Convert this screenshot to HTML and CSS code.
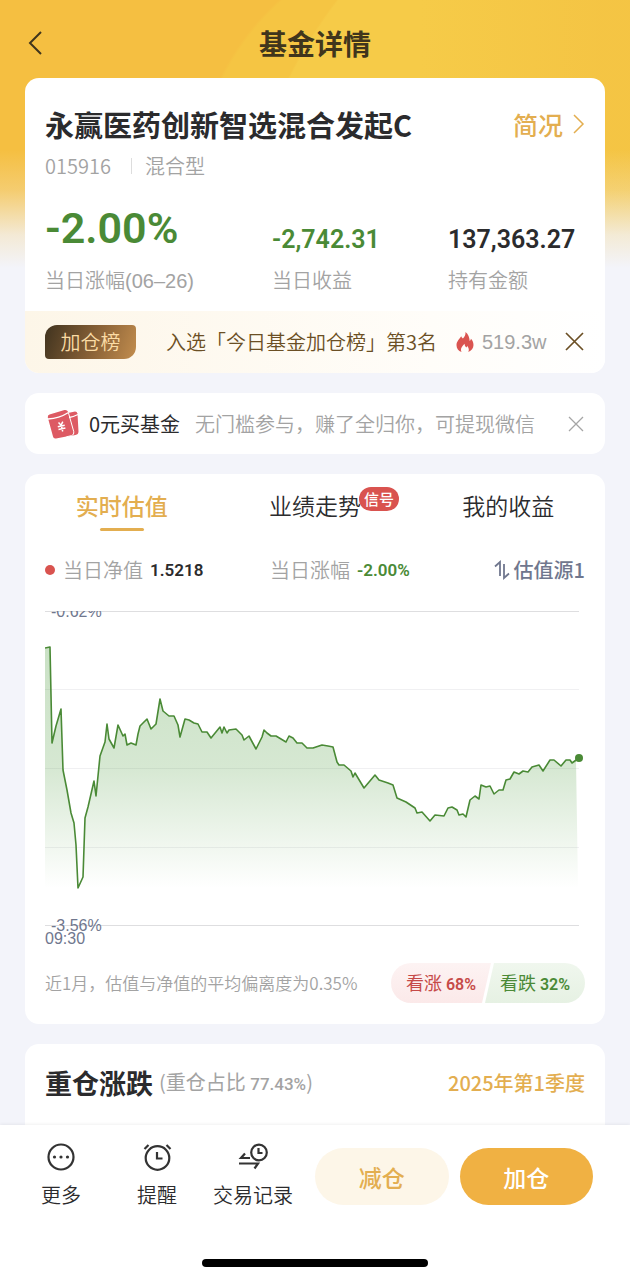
FILE: index.html
```html
<!DOCTYPE html>
<html lang="zh-CN">
<head>
    <meta charset="UTF-8">
    <meta name="viewport" content="width=device-width, initial-scale=1.0">
    <title>基金详情</title>
    <link rel="stylesheet" href="styles.css">
</head>
<body>
    <div class="screen">
        <!-- 顶部导航 -->
        <header class="header">
            <button class="icon-btn back-btn" aria-label="返回">
                <svg width="16" height="26" viewBox="0 0 16 26"><path d="M14 2 3 13l11 11" fill="none" stroke="#40351c" stroke-width="2"/></svg>
            </button>
            <h1>基金详情</h1>
        </header>

        <main class="content">
            <!-- 基金概况 -->
            <section class="card">
                <div class="summary">
                    <div class="fund-head">
                        <h2>永赢医药创新智选混合发起C</h2>
                        <a href="#" class="profile-link">简况
                            <svg width="12" height="22" viewBox="0 0 12 22"><path d="m1 2 9 9-9 9" fill="none" stroke="#e3ae50" stroke-width="1.5"/></svg>
                        </a>
                    </div>
                    <div class="fund-meta"><span>015916</span><i class="divider"></i><span>混合型</span></div>
                    <div class="stats">
                        <div class="stat">
                            <p class="num num-big green">-2.00%</p>
                            <p class="label">当日涨幅(06–26)</p>
                        </div>
                        <div class="stat">
                            <p class="num green">-2,742.31</p>
                            <p class="label">当日收益</p>
                        </div>
                        <div class="stat">
                            <p class="num">137,363.27</p>
                            <p class="label">持有金额</p>
                        </div>
                    </div>
                </div>
                <div class="rank">
                    <span class="rank-tag">加仓榜</span>
                    <span class="rank-text">入选「今日基金加仓榜」第3名</span>
                    <svg class="flame" width="20" height="22" viewBox="0 0 20 22"><path d="M10.500 1c.3 2.800-1 4.800-2.600 6.500-.9-.6-1.400-1.200-1.700-2.200C4.500 8 1.500 10.500 1.500 14.200c0 3.400 1.900 5.800 5 6.800-1.300-3.300.3-5.500 3.100-8.200 0 2 .7 3 1.800 3.600.5-.4.700-1 .7-1.700 1.900 2.200 2.200 4.500 1.200 6.300 3.200-1.100 5.200-3.500 5.200-6.900 0-3-1.300-5.100-2.600-6.300 0 1-.4 1.700-1.200 2.200C14.500 6.700 13.300 3.200 10.500 1z" fill="#da5450"/></svg>
                    <span class="rank-heat">519.3w</span>
                    <button class="icon-btn close-btn" aria-label="关闭榜单">
                        <svg width="20" height="20" viewBox="0 0 20 20"><path d="m1 1 17 17M18 1 1 18" stroke="#6b4f24" stroke-width="1.700"/></svg>
                    </button>
                </div>
            </section>

            <!-- 活动提示 -->
            <section class="card promo">
                <svg class="promo-icon" width="32" height="30" viewBox="0 0 32 30">
                    <path d="m21 4 7-1.500q2 0 2.500 2l1 18q0 3-3 3.500l-8 1.500z" fill="#dd5a63"/>
                    <path d="m2.500 5.500 15-4.500q2.500-.5 3.500 1.800l5.500 20q.5 2.700-2 3.700L9 29.500q-2.500.5-3-2L.8 8.500Q.5 6.200 2.500 5.500z" fill="#dd5a63"/>
                    <path d="M1 10q11-.5 20.500-6.500M22 8.500q4-.5 9-3" fill="none" stroke="#fff" stroke-width="1.300"/>
                    <path d="m21.500 4 5.300 18.800q.6 3-2.300 3.800l-5 1.200" fill="none" stroke="#fff"/>
                    <path d="m11.500 13.500 2.600 2.700 1.700-3.500M10.800 17.800l6.900-1.600M11.500 20.600l6.900-1.600M14.200 16l1.500 6.500" fill="none" stroke="#fff" stroke-width="1.500"/>
                </svg>
                <strong>0元买基金</strong>
                <span class="promo-text">无门槛参与，赚了全归你，可提现微信</span>
                <button class="icon-btn close-btn" aria-label="关闭活动">
                    <svg width="17" height="16" viewBox="0 0 17 16"><path d="m1 1 14 14M15 1 1 15" stroke="#a5a5a5" stroke-width="1.300"/></svg>
                </button>
            </section>

            <!-- 实时估值 -->
            <section class="card">
                <nav class="tabs">
                    <button class="tab active">实时估值</button>
                    <button class="tab">业绩走势<span class="badge">信号</span></button>
                    <button class="tab">我的收益</button>
                </nav>
                <div class="quote">
                    <div class="quote-item"><i class="dot"></i>当日净值<b class="num-sm">1.5218</b></div>
                    <div class="quote-item">当日涨幅<b class="num-sm green">-2.00%</b></div>
                    <button class="source-btn">
                        <svg width="16" height="20" viewBox="0 0 16 20"><path d="M1 6.500 6 2v14M10 4v14l5-4.500" fill="none" stroke="#70778e" stroke-width="1.800"/></svg>
                        估值源1
                    </button>
                </div>
                <div class="chart">
                    <svg viewBox="0 0 540 335" role="img" aria-label="当日估值走势">
                        <defs>
                            <linearGradient id="area" x1="0" y1="36" x2="0" y2="277" gradientUnits="userSpaceOnUse">
                                <stop offset="0" stop-color="#4c9a3c" stop-opacity=".3"/>
                                <stop offset=".5" stop-color="#4c9a3c" stop-opacity=".23"/>
                                <stop offset="1" stop-color="#4c9a3c" stop-opacity="0"/>
                            </linearGradient>
                        </defs>
                        <g class="grid-line">
                            <path class="edge" d="M0 .5h534M0 314.500h534"/>
                            <path d="M0 78.500h534M0 157.500h534M0 236.500h534"/>
                        </g>
                        <path fill="url(#area)" d="M0 37 5 36 7 132 11 115 16 98 18 159 22 179 26 202 29 212 31 234 33 277 38 266 40 207 43 196 49 170 51 185 55 145 60 131 62 113 64 128 69 137 73 114 78 125 80 123 82 134 86 132 91 134 93 123 95 115 102 108 106 118 111 113 115 88 118 100 124 105 129 105 133 114 135 126 140 108 144 109 149 112 153 113 157 121 162 121 166 127 175 116 177 122 179 116 182 122 184 119 191 118 197 124 199 129 204 125 211 138 217 126 219 119 222 122 226 125 231 125 241 131 244 125 248 127 252 132 257 132 262 137 268 137 277 134 283 135 288 136 292 151 294 154 299 154 306 160 308 166 310 162 319 177 330 164 334 169 343 172 348 174 352 187 361 191 370 197 372 202 377 201 385 210 390 204 399 205 403 197 407 196 412 199 414 204 418 203 421 206 425 189 430 185 434 188 436 174 441 176 445 175 449 183 454 179 458 179 461 169 465 168 469 161 474 163 478 160 483 161 487 156 494 154 498 160 505 149 509 149 516 155 521 149 525 149 527 152 531 149 533 277 0 277z"/>
                        <path class="trend" d="M0 37 5 36 7 132 11 115 16 98 18 159 22 179 26 202 29 212 31 234 33 277 38 266 40 207 43 196 49 170 51 185 55 145 60 131 62 113 64 128 69 137 73 114 78 125 80 123 82 134 86 132 91 134 93 123 95 115 102 108 106 118 111 113 115 88 118 100 124 105 129 105 133 114 135 126 140 108 144 109 149 112 153 113 157 121 162 121 166 127 175 116 177 122 179 116 182 122 184 119 191 118 197 124 199 129 204 125 211 138 217 126 219 119 222 122 226 125 231 125 241 131 244 125 248 127 252 132 257 132 262 137 268 137 277 134 283 135 288 136 292 151 294 154 299 154 306 160 308 166 310 162 319 177 330 164 334 169 343 172 348 174 352 187 361 191 370 197 372 202 377 201 385 210 390 204 399 205 403 197 407 196 412 199 414 204 418 203 421 206 425 189 430 185 434 188 436 174 441 176 445 175 449 183 454 179 458 179 461 169 465 168 469 161 474 163 478 160 483 161 487 156 494 154 498 160 505 149 509 149 516 155 521 149 525 149 527 152 534 147"/>
                        <circle cx="534" cy="147" r="4" fill="#4a8a36"/>
                        <text x="6" y="6">-0.62%</text>
                        <text x="6" y="320">-3.56%</text>
                        <text x="0" y="333">09:30</text>
                    </svg>
                </div>
                <div class="chart-foot">
                    <p>近1月，估值与净值的平均偏离度为0.35%</p>
                    <div class="votes">
                        <button class="vote vote-up">看涨<b>68%</b></button>
                        <button class="vote vote-down">看跌<b>32%</b></button>
                    </div>
                </div>
            </section>

            <!-- 重仓涨跌 -->
            <section class="card holdings">
                <h3>重仓涨跌</h3>
                <span class="holdings-ratio">(重仓占比 <b>77.43%</b>)</span>
                <a href="#" class="quarter">2025年第1季度</a>
            </section>
        </main>

        <!-- 底部操作栏 -->
        <footer class="bottom">
            <div class="actions">
                <button class="action">
                    <svg width="30" height="28" viewBox="0 0 30 28"><circle cx="15" cy="14" r="12.500" fill="none" stroke="#333" stroke-width="2.200"/><g fill="#333"><circle cx="8.500" cy="14" r="1.600"/><circle cx="15" cy="14" r="1.600"/><circle cx="21.500" cy="14" r="1.600"/></g></svg>
                    更多
                </button>
                <button class="action">
                    <svg width="30" height="28" viewBox="0 0 30 28" fill="none" stroke="#333" stroke-width="2.200"><circle cx="15.500" cy="15" r="11.800"/><path d="M15 9v6.500h5.500M2.500 6l4-4M28.500 6l-4-4"/></svg>
                    提醒
                </button>
                <button class="action">
                    <svg width="30" height="28" viewBox="0 0 30 28" fill="none" stroke="#333" stroke-width="2.200"><circle cx="21" cy="9.500" r="7.800"/><path d="M20.500 5v5h4M12 15H3l4-4.500M1 20.500h19l-3.500 5"/></svg>
                    交易记录
                </button>
                <div class="trade">
                    <button class="trade-btn sell">减仓</button>
                    <button class="trade-btn buy">加仓</button>
                </div>
            </div>
            <div class="home-bar"></div>
        </footer>
    </div>
</body>
</html>
```
FILE: styles.css
```css
* {
    margin: 0;
    padding: 0;
    box-sizing: border-box;
}

body {
    font-family: "Noto Sans CJK SC", sans-serif;
    font-size: 20px;
    line-height: 28px;
    font-weight: 350;
    color: #2b2b2d;
    background-color: #f3f4fa;
}

button {
    font: inherit;
    color: inherit;
    background: none;
    border: none;
    cursor: pointer;
}

a {
    text-decoration: none;
}

svg {
    display: block;
    flex-shrink: 0;
}

.screen {
    height: 100vh;
    display: flex;
    flex-direction: column;
    background:
        linear-gradient(to bottom, rgba(243, 244, 250, 0) 150px, rgba(243, 244, 250, 0.25) 190px, rgba(243, 244, 250, 0.8) 235px, #f3f4fa 268px),
        linear-gradient(to right, rgba(244, 195, 67, 0) 420px, rgba(244, 195, 67, 0.8) 600px),
        radial-gradient(circle at 700px 280px, #f6cb48 457px, transparent 459px),
        radial-gradient(circle at 450px 190px, #f5c543 253px, transparent 256px),
        #f5bf41;
}

/* 顶部导航 */
.header {
    display: grid;
    grid-template-columns: 40px 1fr 40px;
    align-items: center;
    height: 78px;
    padding: 8px 25px 0;
    flex-shrink: 0;
}

.header h1 {
    font-size: 28px;
    line-height: 40px;
    font-weight: 700;
    color: #40351c;
    text-align: center;
}

.icon-btn {
    display: flex;
    align-items: center;
}

.back-btn {
    padding-left: 2px;
}

.content {
    flex: 1;
    min-height: 0;
    overflow-y: auto;
    scrollbar-width: none;
    display: flex;
    flex-direction: column;
    gap: 20px;
    padding: 0 25px;
}

.card {
    background-color: #fff;
    border-radius: 14px;
    flex-shrink: 0;
    overflow: hidden;
}

/* 基金概况 */
.summary {
    padding: 26px 20px 16px;
}

.fund-head {
    display: flex;
    justify-content: space-between;
    align-items: center;
}

.fund-head h2 {
    font-size: 29px;
    line-height: 40px;
    font-weight: 700;
}

.profile-link {
    display: flex;
    align-items: center;
    gap: 10px;
    font-size: 25px;
    font-weight: 500;
    color: #e3ae50;
}

.fund-meta {
    display: flex;
    align-items: center;
    margin: 8px 0 18px;
    color: #a3a3a3;
}

.divider {
    width: 1px;
    height: 16px;
    margin: 0 13px 0 20px;
    background-color: #ddd;
}

.stats {
    display: grid;
    grid-template-columns: 227fr 176fr 137fr;
    align-items: end;
}

.num {
    font-family: Roboto, sans-serif;
    font-size: 25px;
    line-height: 36px;
    font-weight: 600;
}

.num-big {
    font-size: 43px;
    line-height: 60px;
}

.green {
    color: #4a8a36;
}

.label {
    margin-top: 9px;
    font-family: "Liberation Sans", "Noto Sans CJK SC", sans-serif;
    color: #a3a3a3;
    white-space: nowrap;
}

.rank {
    display: flex;
    align-items: center;
    height: 62px;
    padding: 0 20px;
    background: linear-gradient(to right, #fdf6e8, #fffdf9 70%, #fff);
    color: #6b4f24;
    white-space: nowrap;
}

.rank-tag {
    width: 91px;
    margin-right: 30px;
    line-height: 34px;
    text-align: center;
    color: #fbdca5;
    border-radius: 12px 4px 12px 4px;
    background: linear-gradient(110deg, #40331f, #8a6237 55%, #c28d4e);
}

.flame {
    margin: 0 7px 0 18px;
}

.rank-heat {
    font-family: "Liberation Sans", sans-serif;
    color: #a3a3a3;
}

.close-btn {
    margin-left: auto;
}

/* 活动提示 */
.promo {
    display: flex;
    align-items: center;
    height: 61px;
    padding: 0 20px 0 22px;
    white-space: nowrap;
}

.promo-icon {
    margin-right: 10px;
}

.promo strong {
    margin-right: 15px;
    font-weight: 400;
}

.promo-text {
    color: #a3a3a3;
}

/* 实时估值 */
.tabs {
    display: grid;
    grid-template-columns: repeat(3, 1fr);
    justify-items: center;
    height: 58px;
}

.tab {
    position: relative;
    height: 57px;
    padding: 16px 0 11px;
    font-size: 23px;
    line-height: 30px;
}

.tab.active {
    font-weight: 500;
    color: #e3ae50;
}

.tab.active::after {
    content: "";
    position: absolute;
    left: 50%;
    bottom: 0;
    width: 44px;
    height: 3px;
    margin-left: -22px;
    border-radius: 2px;
    background-color: #e3ae50;
}

.badge {
    position: absolute;
    left: 100%;
    top: 13px;
    margin-left: -2px;
    padding: 0 5px;
    font-size: 15px;
    line-height: 24px;
    font-weight: 500;
    white-space: nowrap;
    color: #fff;
    border-radius: 12px;
    background-color: #d9534f;
}

.quote {
    display: grid;
    grid-template-columns: 225fr 180fr 135fr;
    margin: 24px 20px 27px;
    color: #a3a3a3;
    white-space: nowrap;
}

.quote-item {
    display: flex;
    align-items: center;
}

.dot {
    width: 10px;
    height: 10px;
    margin-right: 8px;
    border-radius: 50%;
    background-color: #d9534f;
}

.num-sm {
    margin-left: 7px;
    font-family: Roboto, sans-serif;
    font-size: 17px;
    font-weight: 600;
    color: #2b2b2d;
}

.num-sm.green {
    color: #4a8a36;
}

.source-btn {
    display: flex;
    align-items: center;
    justify-self: end;
    gap: 4px;
    font-weight: 500;
    color: #70778e;
}

.chart {
    padding: 0 20px;
}

.chart svg {
    width: 100%;
    overflow: hidden;
}

.chart text {
    font-family: "Liberation Sans", sans-serif;
    font-size: 16px;
    fill: #70778e;
}

.grid-line {
    stroke: #f0f0f2;
    stroke-width: 1;
}

.grid-line .edge {
    stroke: #dedee0;
}

.trend {
    fill: none;
    stroke: #4a8a36;
    stroke-width: 1.6;
    stroke-linejoin: round;
}

.chart-foot {
    display: flex;
    align-items: center;
    justify-content: space-between;
    margin: 17px 20px 21px;
    font-size: 17px;
    color: #a3a3a3;
    white-space: nowrap;
}

.votes {
    display: flex;
}

.vote {
    width: 100px;
    height: 40px;
    font-size: 18px;
    font-weight: 400;
}

.vote b {
    margin-left: 4px;
    font-family: Roboto, sans-serif;
    font-size: 16px;
    font-weight: 600;
}

.vote-up {
    color: #c64a48;
    border-radius: 20px 0 0 20px;
    background: linear-gradient(#fdf3f3, #fbe9e9);
    clip-path: polygon(0 0, 100% 0, calc(100% - 9px) 100%, 0 100%);
}

.vote-down {
    margin-left: -6px;
    color: #4a8a36;
    border-radius: 0 20px 20px 0;
    background: linear-gradient(#f0f7ee, #e6f1e3);
    clip-path: polygon(9px 0, 100% 0, 100% 100%, 0 100%);
}

/* 重仓涨跌 */
.holdings {
    display: flex;
    align-items: center;
    padding: 19px 20px 60px;
    white-space: nowrap;
}

.holdings h3 {
    margin-right: 6px;
    font-size: 27px;
    line-height: 40px;
    font-weight: 700;
}

.holdings-ratio {
    font-weight: 400;
    color: #a3a3a3;
}

.holdings-ratio b {
    font-family: Roboto, sans-serif;
    font-size: 17px;
    font-weight: 500;
}

.quarter {
    margin-left: auto;
    font-weight: 500;
    color: #e3ae50;
}

/* 底部操作栏 */
.bottom {
    flex-shrink: 0;
    z-index: 1;
    padding-bottom: 13px;
    background-color: #fff;
    box-shadow: 0 -1px 3px rgba(0, 0, 0, 0.06);
}

.actions {
    display: flex;
    padding: 18px 37px 50px 13px;
}

.action {
    display: flex;
    flex-direction: column;
    align-items: center;
    gap: 10px;
    width: 96px;
    white-space: nowrap;
}

.trade {
    flex: 1;
    display: flex;
    gap: 11px;
    padding: 5px 0 4px;
    margin-left: 14px;
}

.trade-btn {
    flex: 1;
    height: 57px;
    font-size: 23px;
    font-weight: 500;
    border-radius: 29px;
}

.sell {
    color: #e3ae50;
    background-color: #fdf6e8;
}

.buy {
    color: #fff;
    background-color: #f0b143;
}

.home-bar {
    width: 226px;
    height: 8px;
    margin: 0 auto;
    border-radius: 4px;
    background-color: #000;
}
```
